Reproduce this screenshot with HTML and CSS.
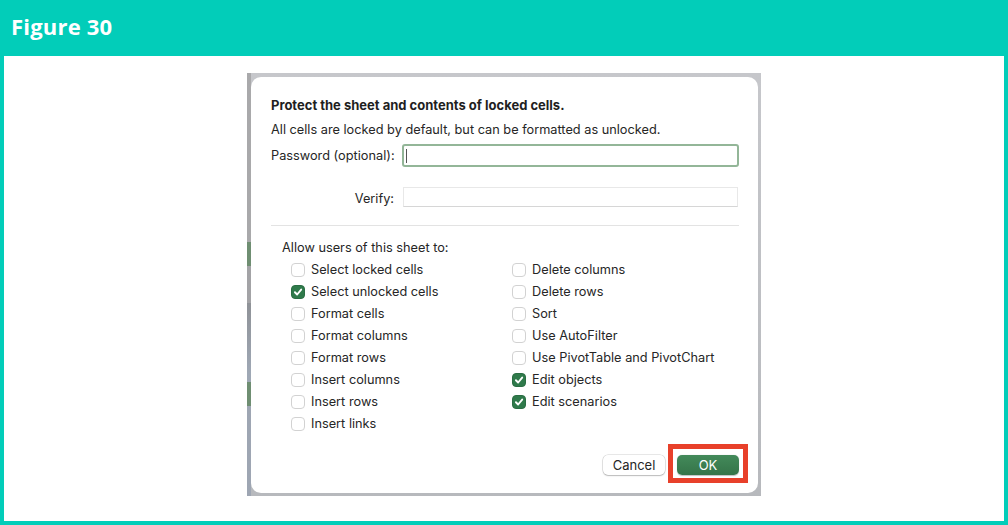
FILE: index.html
```html
<!DOCTYPE html>
<html>
<head>
<meta charset="utf-8">
<link rel="stylesheet" href="styles.css">
</head>
<body>
<header class="fig-header">Figure 30</header>
<main class="panel">
  <div class="shot">
    <div class="dialog">
      <div class="title">Protect the sheet and contents of locked cells.</div>
      <div class="desc">All cells are locked by default, but can be formatted as unlocked.</div>
      <div class="fields">
        <label class="flabel">Password (optional):</label>
        <div class="input focus"><span class="caret"></span></div>
        <label class="flabel verify">Verify:</label>
        <div class="input plain"></div>
      </div>
      <div class="sep"></div>
      <div class="allow">Allow users of this sheet to:</div>
      <div class="checks">
        <div class="col">
          <div class="opt"><span class="box"></span>Select locked cells</div>
          <div class="opt"><span class="box on"><svg viewBox="0 0 14 14"><path d="M3.4 7.3 L6 9.9 L10.7 4.2" /></svg></span>Select unlocked cells</div>
          <div class="opt"><span class="box"></span>Format cells</div>
          <div class="opt"><span class="box"></span>Format columns</div>
          <div class="opt"><span class="box"></span>Format rows</div>
          <div class="opt"><span class="box"></span>Insert columns</div>
          <div class="opt"><span class="box"></span>Insert rows</div>
          <div class="opt"><span class="box"></span>Insert links</div>
        </div>
        <div class="col">
          <div class="opt"><span class="box"></span>Delete columns</div>
          <div class="opt"><span class="box"></span>Delete rows</div>
          <div class="opt"><span class="box"></span>Sort</div>
          <div class="opt"><span class="box"></span>Use AutoFilter</div>
          <div class="opt"><span class="box"></span>Use PivotTable and PivotChart</div>
          <div class="opt"><span class="box on"><svg viewBox="0 0 14 14"><path d="M3.4 7.3 L6 9.9 L10.7 4.2" /></svg></span>Edit objects</div>
          <div class="opt"><span class="box on"><svg viewBox="0 0 14 14"><path d="M3.4 7.3 L6 9.9 L10.7 4.2" /></svg></span>Edit scenarios</div>
        </div>
      </div>
      <div class="buttons">
        <button class="btn cancel">Cancel</button>
        <div class="okwrap">
          <button class="btn ok">OK</button>
          <span class="highlight"></span>
        </div>
      </div>
    </div>
  </div>
</main>
</body>
</html>
```

FILE: styles.css
```css
html, body {
  margin: 0;
  padding: 0;
}
body {
  background: #02cdb9;
  width: 1008px;
  height: 525px;
  overflow: hidden;
  font-family: Inter, "Liberation Sans", Arial, sans-serif;
}
.fig-header {
  height: 56px;
  box-sizing: border-box;
  padding: 12px 0 0 11px;
  color: #ffffff;
  font-family: "Open Sans", "Liberation Sans", sans-serif;
  font-weight: 700;
  font-size: 22px;
  line-height: 28px;
  letter-spacing: 0.2px;
}
.panel {
  margin: 0 4px;
  height: 465px;
  background: #ffffff;
  display: flex;
  justify-content: center;
  align-items: flex-start;
  padding-top: 17px;
  box-sizing: border-box;
}
.shot {
  width: 514px;
  height: 423px;
  box-sizing: border-box;
  padding: 4px 3px 3px 4px;
  background:
    linear-gradient(to bottom,
      #a9a9ab 0px, #a9a9ab 169px,
      #6f8e72 169px, #6f8e72 193px,
      #a3a3a6 193px, #a3a3a6 230px,
      #8f9297 230px, #9fa8b5 300px,
      #9fa8b5 309px, #6f8e72 309px, #6f8e72 333px,
      #9ea6b3 333px, #9ea6b3 423px) left top / 4px 100% no-repeat,
    linear-gradient(to bottom, #c6c7cb 0, #b7b9bd 100%);
}
.dialog {
  height: 416px;
  background: #ffffff;
  border-radius: 10px;
  box-sizing: border-box;
  padding: 20px 19px 0 20px;
  display: flex;
  flex-direction: column;
  color: #262626;
  font-size: 12.75px;
  line-height: 16px;
}
.title {
  font-weight: 700;
  font-size: 13px;
  color: #1f1f1f;
}
.desc {
  margin-top: 9px;
}
.fields {
  margin-top: 6px;
  display: grid;
  grid-template-columns: 123px 1fr;
  column-gap: 8px;
  row-gap: 20px;
  align-items: center;
}
.flabel {
  text-align: left;
  white-space: nowrap;
}
.flabel.verify {
  text-align: right;
  position: relative;
  top: 2px;
}
.input {
  box-sizing: border-box;
  height: 23px;
}
.input.focus {
  border: 2px solid #93b698;
  border-radius: 3px;
  background: #fff;
  display: flex;
  align-items: center;
  padding-left: 2px;
}
.caret {
  width: 1px;
  height: 14px;
  background: #555;
}
.input.plain {
  height: 20px;
  margin: 0 1px 0 1px;
  border: 1px solid #e8e8e8;
  border-bottom-color: #d6d6d6;
}
.sep {
  margin-top: 18px;
  height: 1px;
  background: #e3e3e3;
}
.allow {
  margin-top: 14px;
  padding-left: 11px;
}
.checks {
  margin-top: 6px;
  padding-left: 20px;
  display: flex;
}
.col {
  width: 221px;
  display: flex;
  flex-direction: column;
  row-gap: 6px;
}
.opt {
  display: flex;
  align-items: center;
  column-gap: 6px;
  height: 16px;
  white-space: nowrap;
}
.box {
  width: 14px;
  height: 14px;
  box-sizing: border-box;
  border: 1px solid #d2d2d2;
  border-radius: 4px;
  background: #fff;
  flex: none;
  display: flex;
}
.box.on {
  background: #2f7a4b;
  border-color: #2a6e43;
}
.box svg {
  width: 12px;
  height: 12px;
}
.box svg path {
  fill: none;
  stroke: #ffffff;
  stroke-width: 2.2;
  stroke-linecap: round;
  stroke-linejoin: round;
}
.buttons {
  margin-top: auto;
  margin-bottom: 18px;
  display: flex;
  justify-content: flex-end;
  column-gap: 12px;
  align-items: center;
}
.btn {
  font-family: Inter, "Liberation Sans", Arial, sans-serif;
  font-size: 13px;
  line-height: 16px;
  height: 20px;
  padding: 0;
  margin: 0;
  border-radius: 5px;
}
.cancel {
  width: 62px;
  background: #ffffff;
  color: #262626;
  border: 0;
  box-shadow: 0 0 0 0.5px rgba(0,0,0,0.18), 0 1px 1.5px rgba(0,0,0,0.2);
}
.okwrap {
  position: relative;
}
.ok {
  display: block;
  width: 62px;
  border: 0;
  color: #ffffff;
  background: linear-gradient(to bottom, #438a5a, #357449);
  box-shadow: 0 0.5px 1px rgba(0,0,0,0.25);
}
.highlight {
  position: absolute;
  left: -9px;
  top: -11px;
  width: 80px;
  height: 39px;
  box-sizing: border-box;
  border: 5px solid #e8402a;
  pointer-events: none;
}
```
